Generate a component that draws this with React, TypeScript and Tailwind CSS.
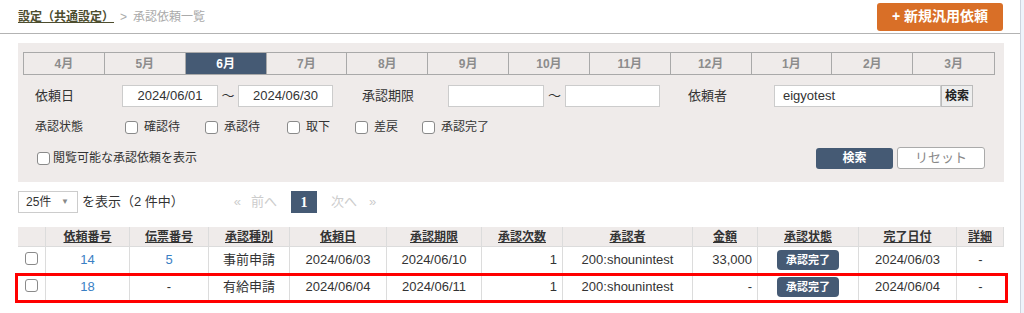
import React from 'react';

const months = ['4月', '5月', '6月', '7月', '8月', '9月', '10月', '11月', '12月', '1月', '2月', '3月'];

type Row = {
  no: string;
  slip: string;
  kind: string;
  date: string;
  limit: string;
  count: string;
  approver: string;
  amount: string;
  done: string;
};

const rows: Row[] = [
  { no: '14', slip: '5', kind: '事前申請', date: '2024/06/03', limit: '2024/06/10', count: '1', approver: '200:shounintest', amount: '33,000', done: '2024/06/03' },
  { no: '18', slip: '-', kind: '有給申請', date: '2024/06/04', limit: '2024/06/11', count: '1', approver: '200:shounintest', amount: '-', done: '2024/06/04' },
];

const heads = ['依頼番号', '伝票番号', '承認種別', '依頼日', '承認期限', '承認次数', '承認者', '金額', '承認状態', '完了日付', '詳細'];
const widths = ['w-[84px]', 'w-[79px]', 'w-[81px]', 'w-[97px]', 'w-[95px]', 'w-[81px]', 'w-[130px]', 'w-[65px]', 'w-[101px]', 'w-[98px]', 'w-[47px]'];

const Box = () => (
  <span className="inline-block w-[13px] h-[13px] border border-[#8a8a8a] rounded-[3px] bg-white shrink-0" />
);

const Check = ({ label, w }: { label: string; w: string }) => (
  <div className={`flex items-center gap-[6px] ${w}`}>
    <Box />
    <span>{label}</span>
  </div>
);

const Cell = ({ w, children, right }: { w: string; children: React.ReactNode; right?: boolean }) => (
  <div className={`${w} shrink-0 flex items-center border-r border-[#dcdcdc] ${right ? 'justify-end pr-[5px]' : 'justify-center'}`}>
    {children}
  </div>
);

export default function App() {
  return (
    <div className="flex w-[1024px] h-[313px] bg-white text-[#333] font-['Liberation_Sans','Noto_Sans_CJK_JP',sans-serif] overflow-hidden">
      <div className="w-[1021px] shrink-0 border-r border-[#cdd4de]">
        {/* header */}
        <div className="h-[34px] border-b border-[#b3b3b3] flex items-center justify-between pl-[18px] pr-[17px]">
          <div className="text-[12px] flex items-center gap-[6px]">
            <span className="underline font-bold text-[#4d4d2e]">設定（共通設定）</span>
            <span className="text-[#aaa]">&gt;</span>
            <span className="text-[#aaa]">承認依頼一覧</span>
          </div>
          <button className="h-[28px] w-[126px] rounded-[3px] bg-[#d96f27] text-white font-bold text-[14px]">
            + 新規汎用依頼
          </button>
        </div>

        {/* filter panel */}
        <div className="mt-[9px] ml-[18px] w-[986px] bg-[#efebea] pt-[9px] pb-[13px] text-[12px]">
          <div className="ml-[5px] w-[972px] grid grid-cols-12 border border-[#a9a9a9]">
            {months.map((m, i) => (
              <div
                key={m}
                className={`h-[21px] flex items-center justify-center font-bold ${i < 11 ? 'border-r border-[#a9a9a9]' : ''} ${m === '6月' ? 'bg-[#455a74] text-white' : 'text-[#8c8c8c]'}`}
              >
                {m}
              </div>
            ))}
          </div>

          <div className="mt-[10px] pl-[17px] flex items-center h-[22px] text-[13px]">
            <span className="w-[87px]">依頼日</span>
            <div className="w-[96px] h-[22px] bg-white border border-[#ccc] flex items-center justify-center">2024/06/01</div>
            <span className="w-[20px] text-center">〜</span>
            <div className="w-[95px] h-[22px] bg-white border border-[#ccc] flex items-center justify-center">2024/06/30</div>
            <span className="ml-[29px] w-[86px]">承認期限</span>
            <div className="w-[96px] h-[22px] bg-white border border-[#ccc]" />
            <span className="w-[21px] text-center">〜</span>
            <div className="w-[95px] h-[22px] bg-white border border-[#ccc]" />
            <span className="ml-[28px] w-[86px]">依頼者</span>
            <div className="w-[167px] h-[22px] bg-white border border-[#ccc] flex items-center pl-[8px]">eigyotest</div>
            <button className="w-[32px] h-[22px] bg-[#eee] border border-[#bbb] font-bold text-[12px] text-[#222]">検索</button>
          </div>

          <div className="mt-[10px] pl-[17px] flex items-center h-[20px] text-[12px]">
            <span className="w-[90px]">承認状態</span>
            <Check label="確認待" w="w-[80px]" />
            <Check label="承認待" w="w-[82px]" />
            <Check label="取下" w="w-[68px]" />
            <Check label="差戻" w="w-[67px]" />
            <Check label="承認完了" w="w-auto" />
          </div>

          <div className="mt-[10px] pl-[19px] pr-[19px] flex items-center justify-between h-[22px]">
            <div className="flex items-center gap-[3px] text-[12px]">
              <Box />
              <span>閲覧可能な承認依頼を表示</span>
            </div>
            <div className="flex items-center gap-[4px]">
              <button className="w-[77px] h-[21px] rounded-[3px] bg-[#455a74] text-white font-bold text-[12px]">検索</button>
              <button className="w-[88px] h-[22px] rounded-[3px] bg-white border border-[#aaa] text-[#888] text-[13px]">リセット</button>
            </div>
          </div>
        </div>

        {/* pager */}
        <div className="mt-[9px] ml-[18px] flex items-center h-[22px] text-[12px]">
          <div className="w-[60px] h-[22px] border border-[#ccc] bg-white flex items-center justify-between pl-[7px] pr-[8px]">
            <span>25件</span>
            <span className="text-[8px] text-[#888]">▼</span>
          </div>
          <span className="ml-[4px] text-[13px]">を表示（2 件中）</span>
          <span className="ml-[50px] text-[#ccc] text-[13px]">«</span>
          <span className="ml-[10px] text-[#ccc] text-[13px]">前へ</span>
          <div className="ml-[14px] w-[26px] h-[22px] bg-[#455a74] text-white font-bold flex items-center justify-center font-['Liberation_Serif',serif] text-[14px]">1</div>
          <span className="ml-[14px] text-[#ccc] text-[13px]">次へ</span>
          <span className="ml-[12px] text-[#ccc] text-[13px]">»</span>
        </div>

        {/* table */}
        <div className="relative mt-[14px] ml-[18px] w-[986px] text-[13px]">
          <div className="flex h-[20px] bg-[#efebea] border-b border-[#dcdcdc] text-[12px] font-bold">
            <div className="w-[28px] shrink-0 border-r border-[#dcdcdc]" />
            {heads.map((h, i) => (
              <Cell key={h} w={widths[i]}>
                <span className="underline text-[#333]">{h}</span>
              </Cell>
            ))}
          </div>
          {rows.map((r) => (
            <div key={r.no} className="flex h-[27px] border-b border-[#dcdcdc] bg-white">
              <div className="w-[28px] shrink-0 border-r border-[#dcdcdc] flex justify-center pt-[5px]">
                <Box />
              </div>
              <Cell w={widths[0]}><span className="text-[#3a80c4]">{r.no}</span></Cell>
              <Cell w={widths[1]}><span className={r.slip === '-' ? '' : 'text-[#3a80c4]'}>{r.slip}</span></Cell>
              <Cell w={widths[2]}>{r.kind}</Cell>
              <Cell w={widths[3]}>{r.date}</Cell>
              <Cell w={widths[4]}>{r.limit}</Cell>
              <Cell w={widths[5]} right>{r.count}</Cell>
              <Cell w={widths[6]}>{r.approver}</Cell>
              <Cell w={widths[7]} right>{r.amount}</Cell>
              <Cell w={widths[8]}>
                <span className="w-[62px] h-[20px] rounded-[4px] bg-[#455a74] text-white font-bold text-[11px] flex items-center justify-center">承認完了</span>
              </Cell>
              <Cell w={widths[9]}>{r.done}</Cell>
              <div className="w-[47px] shrink-0 flex items-center justify-center">-</div>
            </div>
          ))}
          <div className="absolute left-[-3px] top-[46px] w-[993px] h-[30px] border-[3px] border-[#f00]" />
        </div>
      </div>
      <div className="flex-1 bg-[#eef3fa]" />
    </div>
  );
}
